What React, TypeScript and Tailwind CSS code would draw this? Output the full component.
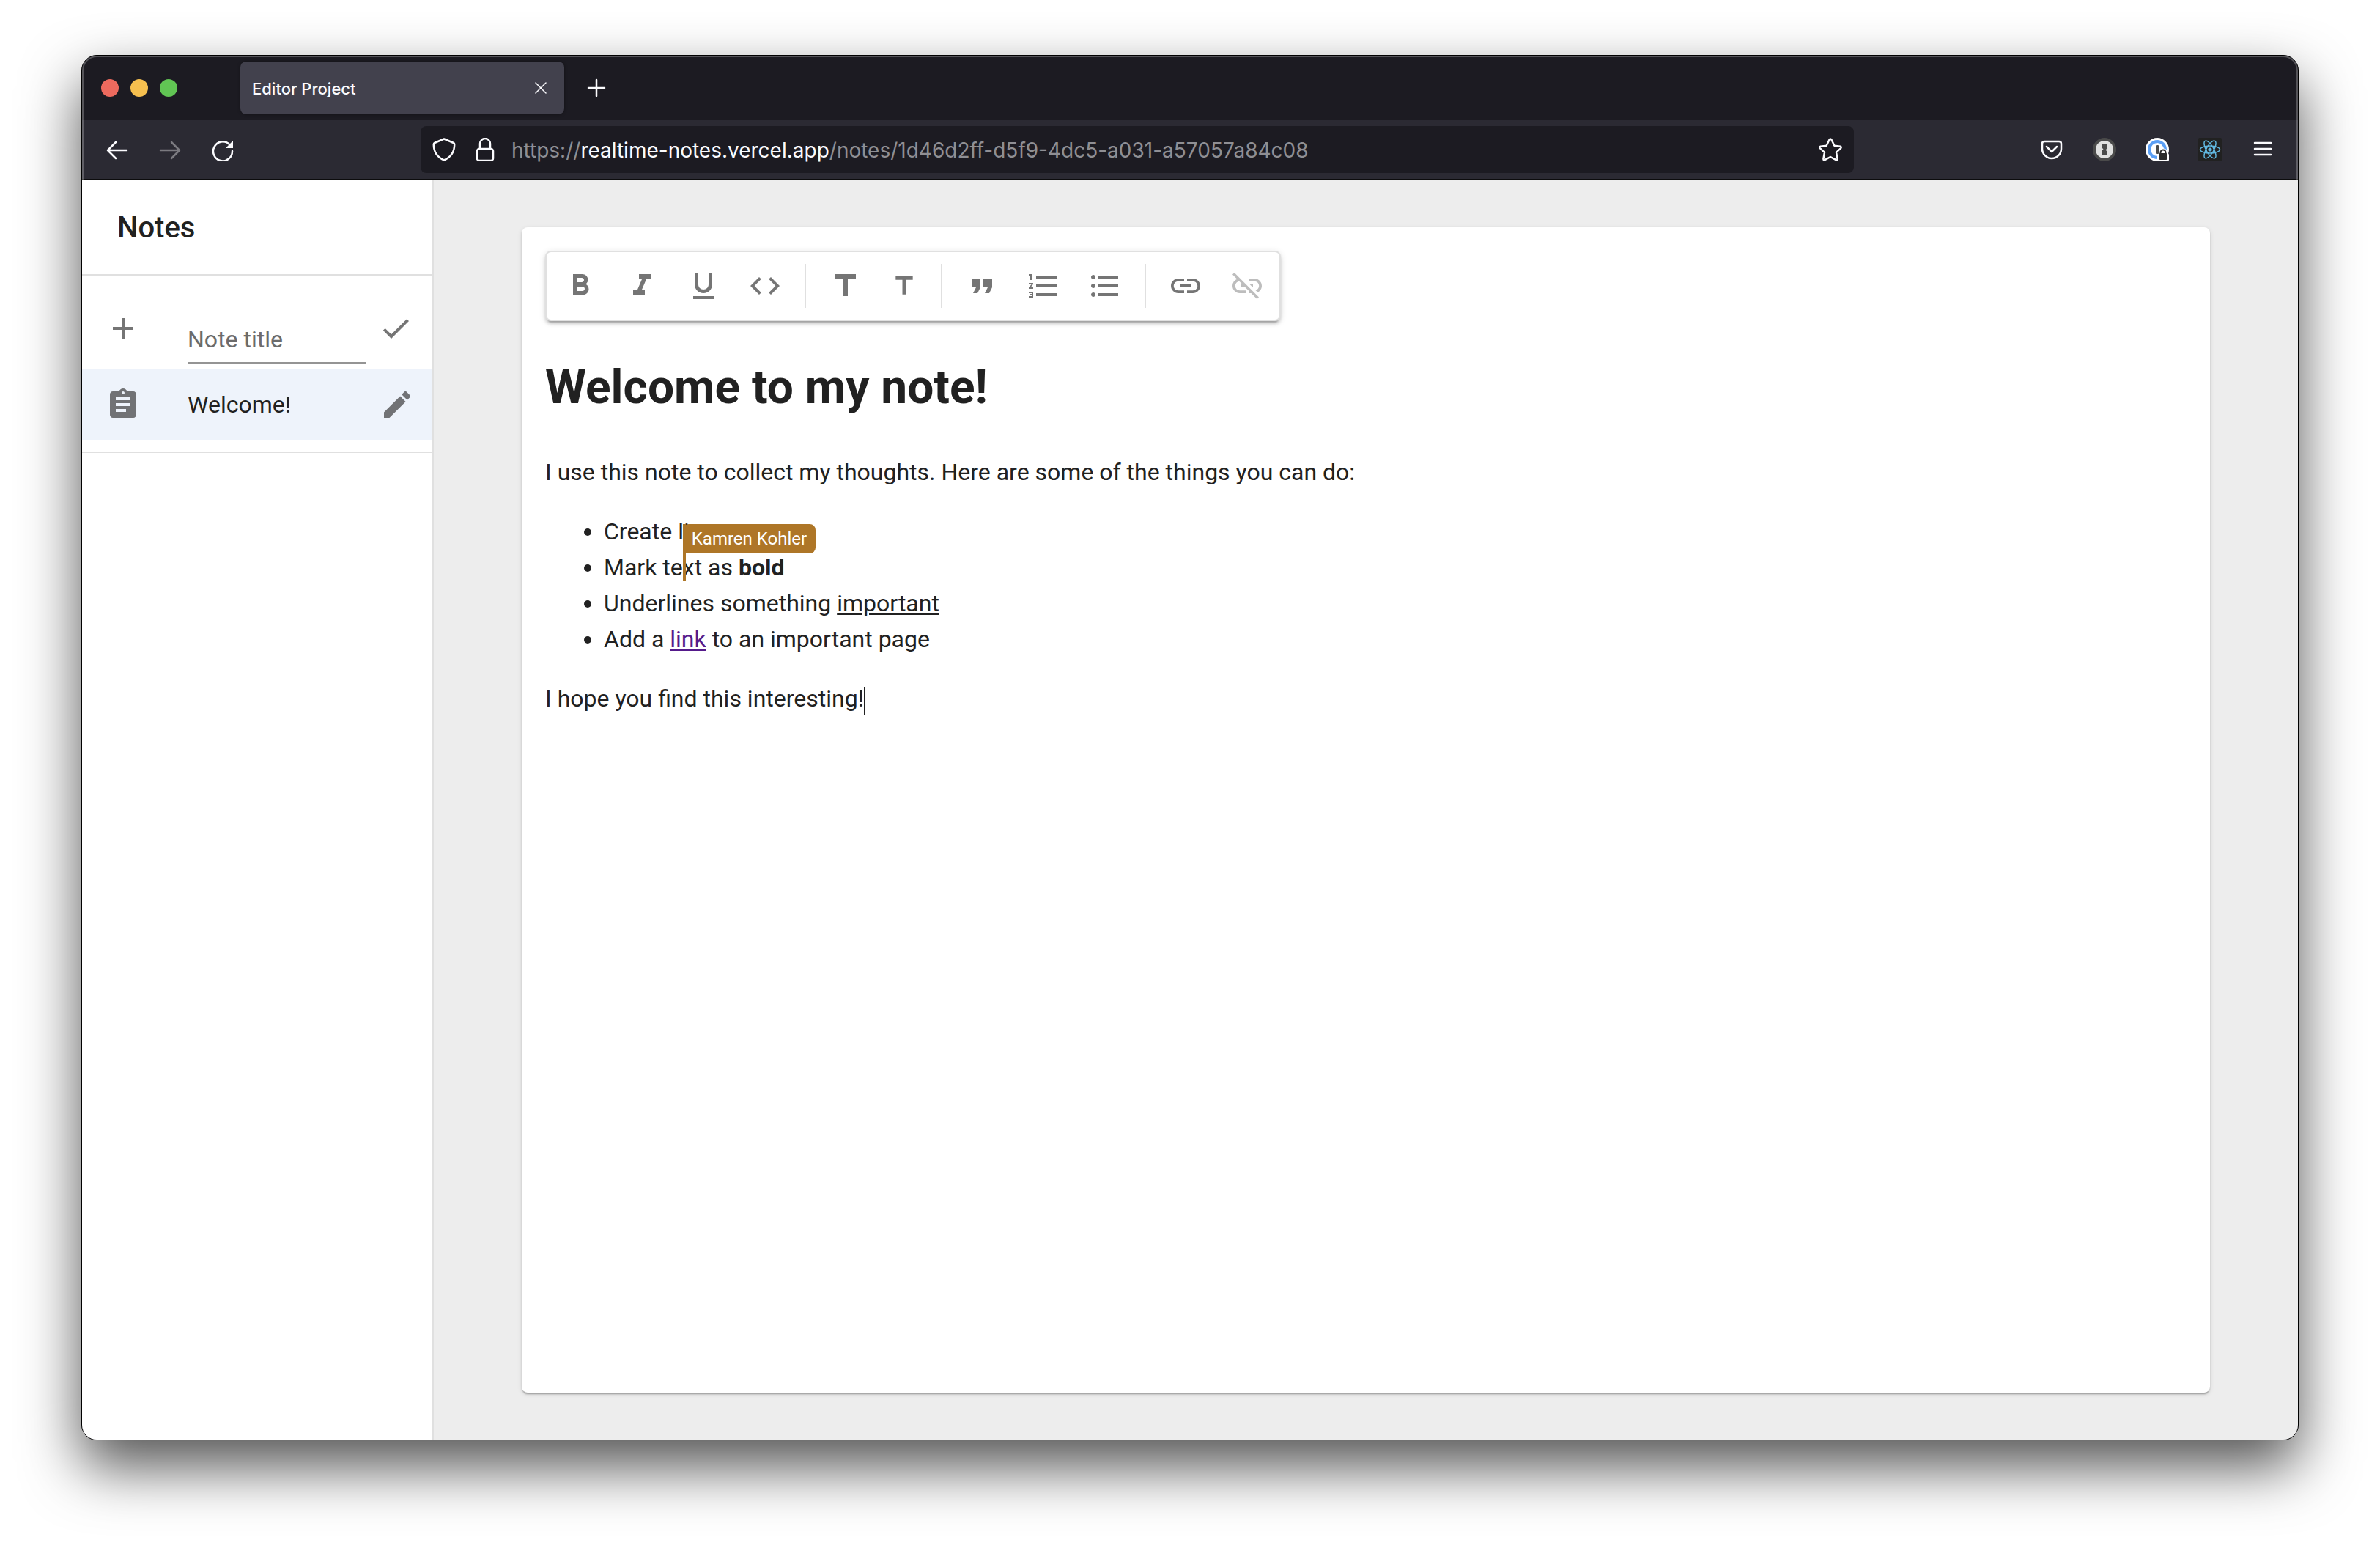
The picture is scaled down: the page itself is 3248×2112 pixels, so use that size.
import React from 'react'
import {
  MdAdd,
  MdAssignment,
  MdCheck,
  MdCode,
  MdEdit,
  MdFormatBold,
  MdFormatItalic,
  MdFormatListBulleted,
  MdFormatListNumbered,
  MdFormatQuote,
  MdFormatUnderlined,
  MdLink,
  MdLinkOff,
  MdTitle,
} from 'react-icons/md'

type IconProps = { className?: string }

function Stroke({ children, className = 'size-8', width = 2 }: { children: React.ReactNode; className?: string; width?: number }) {
  return (
    <svg
      viewBox="0 0 32 32"
      fill="none"
      stroke="currentColor"
      strokeWidth={width}
      strokeLinecap="round"
      strokeLinejoin="round"
      className={className}
      aria-hidden="true"
    >
      {children}
    </svg>
  )
}

function OnePasswordGray() {
  return (
    <svg viewBox="0 0 32 32" className="size-8" aria-hidden="true">
      <circle cx="16" cy="16" r="16" fill="#4a4a4a" />
      <circle cx="16" cy="16" r="12" fill="#e0e0e0" />
      <path d="M13 8h6v7l-1.500 1.500L19 18v6h-6v-7l1.500-1.500L13 14z" fill="#4a4a4a" />
    </svg>
  )
}

function OnePasswordLocked() {
  return (
    <svg viewBox="0 0 32 32" className="size-8" aria-hidden="true">
      <circle cx="16" cy="16" r="16" fill="#fff" />
      <circle cx="16" cy="16" r="11" fill="#fff" stroke="#5b9ff5" strokeWidth="4" />
      <rect x="14" y="10" width="4" height="12" rx="1" fill="#4a4a4a" />
      <path d="M16 22h2v-1a6.500 6.500 0 0 1 13 0l1 2v7q0 2-2 2H18q-2 0-2-2z" fill="#fff" />
      <rect x="18" y="21" width="12" height="9" rx="2" fill="#2b2b2b" />
      <path d="M20.500 22v-2a3.500 3.500 0 0 1 7 0v2" fill="none" stroke="#2b2b2b" strokeWidth="2" />
    </svg>
  )
}

function ReactBadge() {
  return (
    <svg viewBox="0 0 32 32" className="size-8" aria-hidden="true">
      <rect width="32" height="32" rx="2" fill="#212121" />
      <g fill="none" stroke="#61b8e0" strokeWidth="1.500">
        <ellipse cx="16" cy="16" rx="13.500" ry="5" />
        <ellipse cx="16" cy="16" rx="13.500" ry="5" transform="rotate(60 16 16)" />
        <ellipse cx="16" cy="16" rx="13.500" ry="5" transform="rotate(120 16 16)" />
      </g>
      <circle cx="16" cy="16" r="2.600" fill="#61b8e0" />
    </svg>
  )
}

function TabBar() {
  return (
    <div className="flex h-22 items-center bg-[#1c1b22] pl-[26px]">
      <div className="flex w-[190px] gap-4">
        <button type="button" aria-label="Close window" className="size-6 rounded-full bg-[#ed6a5e]" />
        <button type="button" aria-label="Minimize window" className="size-6 rounded-full bg-[#f5bf4f]" />
        <button type="button" aria-label="Zoom window" className="size-6 rounded-full bg-[#61c554]" />
      </div>
      <div className="flex h-18 w-[442px] items-center justify-between rounded-lg bg-[#42414d] pr-6 pl-4 shadow-[0_0_4px_rgba(0,0,0,0.4)]">
        <span className="pt-0.5 text-[22px] font-medium text-[#fbfbfe]">Editor Project</span>
        <button type="button" aria-label="Close tab" className="text-[#fbfbfe]">
          <svg viewBox="0 0 16 16" className="size-4" fill="none" stroke="currentColor" strokeWidth="1.500" strokeLinecap="round" aria-hidden="true">
            <path d="M1 1l14 14M15 1L1 15" />
          </svg>
        </button>
      </div>
      <button type="button" aria-label="New tab" className="ml-7 text-[#fbfbfe]">
        <Stroke width={2.5}>
          <path d="M16 5v22M5 16h22" />
        </Stroke>
      </button>
    </div>
  )
}

function NavBar() {
  return (
    <div className="flex h-[82px] items-center border-b-2 border-[#0c0c0d] bg-[#2b2a33] pr-8 pl-8 text-[#fbfbfe]">
      <div className="flex w-[430px] gap-10">
        <button type="button" aria-label="Back">
          <Stroke width={2.5}>
            <path d="M29 17H3M14 6L3 17l11 11" />
          </Stroke>
        </button>
        <button type="button" aria-label="Forward" disabled className="text-[#7b7a80]">
          <Stroke width={2.5}>
            <path d="M3 17h26M18 6l11 11-11 11" />
          </Stroke>
        </button>
        <button type="button" aria-label="Reload">
          <Stroke width={2.5}>
            <path d="M29 18a13 13 0 1 1-4-9" />
            <path d="M30 4v10H20z" fill="currentColor" stroke="none" />
          </Stroke>
        </button>
      </div>
      <div className="flex h-16 w-[1956px] items-center rounded-lg bg-[#1c1b22] px-4">
        <button type="button" aria-label="Tracking protection">
          <Stroke width={2.5}>
            <path d="M16 1.500L29 7q1.200.500 1.200 2c0 10-5.200 17.500-14.200 21.500C7 26.500 1.800 19 1.800 9q0-1.500 1.200-2z" />
          </Stroke>
        </button>
        <button type="button" aria-label="Connection is secure" className="ml-6">
          <Stroke width={2.5}>
            <path d="M9 15V8a7 7 0 0 1 14 0v7" />
            <rect x="5" y="15" width="22" height="16" rx="3" />
          </Stroke>
        </button>
        <div className="ml-5 grow pt-0.5 text-[28px] leading-8 text-[#8f8f94]">
          https://<span className="text-[#fbfbfe]">realtime-notes.vercel.app</span>/notes/1d46d2ff-d5f9-4dc5-a031-a57057a84c08
        </div>
        <button type="button" aria-label="Bookmark this page">
          <Stroke width={2.5}>
            <path d="M14.600 2.500q1.400-2 2.800 0l4 8.200 8.100 1q2 .600.700 2.400L24 19.800l1.600 9q0 2-2 1.400L16 26l-7.600 4.200q-2 .600-2-1.400l1.600-9-6.200-5.700q-1.300-1.800.700-2.400l8.100-1z" />
          </Stroke>
        </button>
      </div>
      <div className="flex grow justify-end gap-10">
        <button type="button" aria-label="Save to Pocket">
          <Stroke width={2.5}>
            <path d="M6 5h20q3 0 3 3v7a13 13 0 0 1-26 0V8q0-3 3-3z" />
            <path d="M9 12l7 7 7-7" />
          </Stroke>
        </button>
        <button type="button" aria-label="1Password">
          <OnePasswordGray />
        </button>
        <button type="button" aria-label="1Password, locked">
          <OnePasswordLocked />
        </button>
        <button type="button" aria-label="React Developer Tools">
          <ReactBadge />
        </button>
        <button type="button" aria-label="Open application menu">
          <Stroke width={2.5}>
            <path d="M5 7h22M5 15h22M5 23h22" />
          </Stroke>
        </button>
      </div>
    </div>
  )
}

function Sidebar() {
  return (
    <aside className="w-[480px] shrink-0 border-r-2 border-[#e0e0e0] bg-white">
      <div className="flex h-[130px] items-center border-b-2 border-[#e0e0e0] pt-0.5 pl-12">
        <h2 className="text-[40px] font-medium">Notes</h2>
      </div>
      <ul className="border-b-2 border-[#e0e0e0] py-4">
        <li className="flex h-28 items-center pr-[26px] pl-8">
          <MdAdd className="mr-16 size-12 shrink-0 text-[#757575]" aria-hidden="true" />
          <input
            type="text"
            aria-label="Note title"
            placeholder="Note title"
            className="mt-8 mr-4 h-16 min-w-0 grow border-b-2 border-[#949494] text-[32px] placeholder:text-[#6b6b6b]"
          />
          <button type="button" aria-label="Create note" className="text-[#757575]">
            <MdCheck className="size-12" />
          </button>
        </li>
        <li className="flex h-24 items-center bg-[#eef3fb] pr-6 pl-8 text-[#717275]">
          <MdAssignment className="mr-16 size-12 shrink-0" aria-hidden="true" />
          <a href="#welcome" className="grow text-[32px] text-[#212121]">
            Welcome!
          </a>
          <button type="button" aria-label="Rename note">
            <MdEdit className="size-12" />
          </button>
        </li>
      </ul>
    </aside>
  )
}

type Tool = { label: string; icon: React.ComponentType<IconProps>; small?: boolean; disabled?: boolean }

const toolGroups: Tool[][] = [
  [
    { label: 'Bold', icon: MdFormatBold },
    { label: 'Italic', icon: MdFormatItalic },
    { label: 'Underline', icon: MdFormatUnderlined },
    { label: 'Code', icon: MdCode },
  ],
  [
    { label: 'Heading 1', icon: MdTitle },
    { label: 'Heading 2', icon: MdTitle, small: true },
  ],
  [
    { label: 'Quote', icon: MdFormatQuote },
    { label: 'Numbered list', icon: MdFormatListNumbered },
    { label: 'Bulleted list', icon: MdFormatListBulleted },
  ],
  [
    { label: 'Add link', icon: MdLink },
    { label: 'Remove link', icon: MdLinkOff, disabled: true },
  ],
]

function Toolbar() {
  return (
    <div
      role="toolbar"
      aria-label="Formatting"
      className="flex h-24 w-fit items-center rounded-lg border-2 border-[#e0e0e0] bg-white pr-0.5 pl-1 shadow-[0_6px_2px_-4px_rgba(0,0,0,0.2),0_4px_4px_rgba(0,0,0,0.14),0_2px_10px_rgba(0,0,0,0.12)]"
    >
      {toolGroups.map((group, index) => (
        <React.Fragment key={group[0].label}>
          {index > 0 && <div className="mx-3 h-15 w-0.5 bg-[#e0e0e0]" />}
          {group.map(({ label, icon: Icon, small, disabled }) => (
            <button
              key={label}
              type="button"
              aria-label={label}
              disabled={disabled}
              className="px-[18px] text-[#757575] disabled:text-[#bdbdbd]"
            >
              <Icon className={small ? 'size-10' : 'size-12'} />
            </button>
          ))}
        </React.Fragment>
      ))}
    </div>
  )
}

function RemoteCaret({ name }: { name: string }) {
  return (
    <span className="relative">
      <span className="absolute -top-10 left-0 h-[78px] w-1 bg-[#ae7627]">
        <span className="absolute top-0 left-0 flex h-10 items-center rounded-lg rounded-bl-none bg-[#ae7627] px-3 text-2xl whitespace-nowrap text-white">
          {name}
        </span>
      </span>
    </span>
  )
}

function Note() {
  return (
    <article className="text-[32px] leading-[49px]">
      <h1 className="my-[42px] text-[64px] leading-[98px] font-bold">Welcome to my note!</h1>
      <p className="my-8">I use this note to collect my thoughts. Here are some of the things you can do:</p>
      <ul className="my-8 list-disc pl-20">
        <li>Create lists</li>
        <li>
          Mark te
          <RemoteCaret name="Kamren Kohler" />
          xt as <strong className="font-bold">bold</strong>
        </li>
        <li>
          Underlines something <u>important</u>
        </li>
        <li>
          Add a{' '}
          <a href="#page" className="text-[#551a8b] underline">
            link
          </a>{' '}
          to an important page
        </li>
      </ul>
      <p className="my-8">
        I hope you find this interesting!
        <span className="inline-block h-[38px] w-0.5 bg-[#212121] align-middle" />
      </p>
    </article>
  )
}

export default function App() {
  return (
    <div className="flex h-screen bg-white px-[111px] pt-[75px] pb-[147px]">
      <div className="flex grow flex-col overflow-hidden rounded-[21px] border border-black bg-[#2b2a33] shadow-[0_36px_80px_rgba(0,0,0,0.68)]">
        <header className="relative font-['Inter',sans-serif]">
          <TabBar />
          <NavBar />
          <div className="pointer-events-none absolute inset-0 rounded-t-[20px] border-x-2 border-t-2 border-white/25" />
        </header>
        <div className="flex min-h-0 grow font-['Roboto',sans-serif] text-[#212121]">
          <Sidebar />
          <main className="flex grow bg-[#ededed] px-30 py-16">
            <section className="grow rounded-lg bg-white p-8 shadow-[0_4px_2px_-2px_rgba(0,0,0,0.2),0_2px_2px_rgba(0,0,0,0.14),0_2px_6px_rgba(0,0,0,0.12)]">
              <Toolbar />
              <Note />
            </section>
          </main>
        </div>
      </div>
    </div>
  )
}
